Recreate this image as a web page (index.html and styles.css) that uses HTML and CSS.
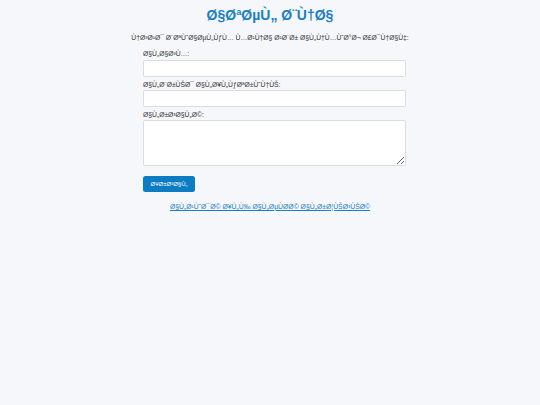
FILE: index.html
```html
<!DOCTYPE html>
<html lang="ar">
<head>
<meta charset="utf-8">
<title>Ø§ØªØµÙ„ Ø¨Ù†Ø§</title>
<link rel="stylesheet" href="styles.css">
</head>
<body>
<div class="page">
  <h1 class="title">Ø§ØªØµÙ„ Ø¨Ù†Ø§</h1>
  <p class="intro">Ù†Ø³Ø¹Ø¯ Ø¨ØªÙˆØ§ØµÙ„ÙƒÙ… Ù…Ø¹Ù†Ø§ Ø¹Ø¨Ø± Ø§Ù„Ù†Ù…ÙˆØ°Ø¬ Ø£Ø¯Ù†Ø§Ù‡:</p>
  <form class="form">
    <label class="label" for="name">Ø§Ù„Ø§Ø³Ù…:</label>
    <input class="field" id="name" type="text">
    <label class="label" for="email">Ø§Ù„Ø¨Ø±ÙŠØ¯ Ø§Ù„Ø¥Ù„ÙƒØªØ±ÙˆÙ†ÙŠ:</label>
    <input class="field" id="email" type="email">
    <label class="label" for="msg">Ø§Ù„Ø±Ø³Ø§Ù„Ø©:</label>
    <textarea class="field area" id="msg"></textarea>
    <button class="btn" type="button">Ø¥Ø±Ø³Ø§Ù„</button>
  </form>
  <p class="back"><a class="back-link" href="#">Ø§Ù„Ø¹ÙˆØ¯Ø© Ø¥Ù„Ù‰ Ø§Ù„ØµÙØ­Ø© Ø§Ù„Ø±Ø¦ÙŠØ³ÙŠØ©</a></p>
</div>
</body>
</html>
```
FILE: styles.css
```css
html, body {
  margin: 0;
  padding: 0;
  background: #f5f7fa;
}
body {
  font-family: "Liberation Sans", Arial, sans-serif;
  color: #333;
}
.page {
  display: flex;
  flex-direction: column;
  align-items: center;
  padding-top: 7.4px;
}
.title {
  margin: 0;
  font-size: 14px;
  line-height: 16px;
  font-weight: bold;
  color: #1a80c4;
  text-align: center;
}
.intro {
  margin: 10.4px 0 0;
  font-size: 6.75px;
  line-height: 8px;
  color: #333;
  text-align: center;
}
.form {
  width: 254px;
  display: flex;
  flex-direction: column;
  align-items: flex-start;
  margin-top: 8.7px;
}
.label {
  display: block;
  font-size: 6.75px;
  line-height: 8px;
  color: #333;
  margin-bottom: 1.3px;
}
.field {
  box-sizing: border-box;
  width: 263px;
  height: 17.5px;
  margin: 0 0 3.4px;
  padding: 4px;
  border: 1px solid #dcdcdc;
  border-radius: 1.5px;
  background: #fff;
  font-family: inherit;
  font-size: 6.75px;
}
.area {
  height: 45.5px;
  margin-bottom: 0;
  display: block;
}
.btn {
  margin-top: 10.6px;
  width: 52px;
  height: 16px;
  padding: 0;
  border: none;
  border-radius: 2.5px;
  background: #0c7dc2;
  color: #fff;
  font-family: inherit;
  font-size: 6px;
  cursor: pointer;
}
.back {
  margin: 10.5px 0 0;
  font-size: 6.85px;
  line-height: 8px;
  text-align: center;
}
.back-link {
  color: #1a80c4;
  text-decoration: underline;
}
```
